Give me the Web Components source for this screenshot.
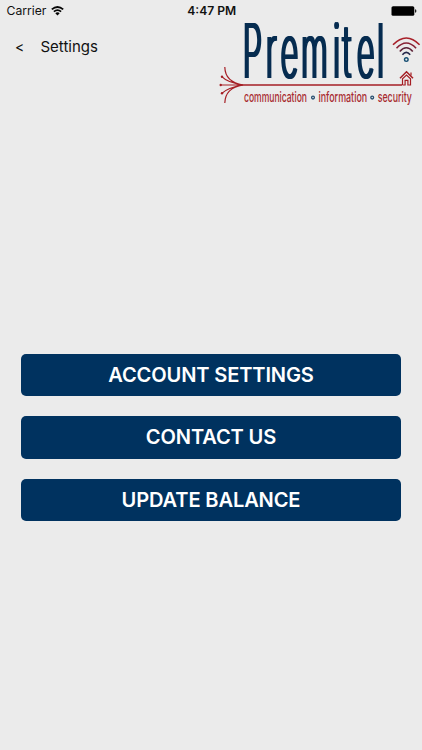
<!DOCTYPE html>
<html lang="en"><head><meta charset="utf-8"><title>Settings</title>
<style>html,body{margin:0;height:100%;background:#ebebeb}</style></head>
<body><settings-screen></settings-screen>
<script>
function define(name, markup) {
  customElements.define(name, class extends HTMLElement {
    constructor() { super(); this.attachShadow({mode:'open'}).innerHTML = markup; }
  });
}
define('status-bar', `<style>
:host{display:grid;grid-template-columns:1fr auto 1fr;align-items:center;height:22px;padding:0 5px 0 6.5px;box-sizing:border-box;font-size:12.2px;line-height:22px}
.left{display:flex;align-items:center;gap:5px}
.time{font-weight:600;font-size:12.1px}
.battery{justify-self:end}
svg{display:block}
</style><div class="left"><span>Carrier</span><svg width="13" height="10" viewBox="0 0 13 10" fill="none" stroke="#050505" stroke-width="1.8"><path d="M.8 3.4Q6.5-1.5 12.2 3.4M2.9 5.7Q6.5 2.5 10.1 5.7"/><path d="M4.3 7.2Q6.5 5.3 8.7 7.2L6.5 9.5Z" fill="#050505" stroke="none"/></svg></div>
<span class="time">4:47 PM</span>
<svg class="battery" width="26" height="10" viewBox="0 0 26 10"><rect x=".5" y=".2" width="22.8" height="9.6" rx="1.6"/><path d="M24.1 3.2q1.3.3 1.3 1.8t-1.3 1.8z"/></svg>`);
define('brand-logo', `<style>
:host{display:block;width:206px;height:90px}svg{display:block;overflow:visible}
text{font-family:Inter,sans-serif}
.name{font-size:75.2px;font-weight:300;fill:#062c50}
.tag{font-size:14px;font-weight:500;fill:#a82a30}
</style><svg width="206" height="90" viewBox="216 18 206 90">
<defs><filter id="wide" filterUnits="userSpaceOnUse" x="216" y="0" width="206" height="110" color-interpolation-filters="sRGB"><feOffset in="SourceGraphic" dx="1" result="a"/><feOffset in="SourceGraphic" dx="2" result="b"/><feMerge><feMergeNode in="SourceGraphic"/><feMergeNode in="a"/><feMergeNode in="b"/></feMerge></filter></defs>
<g filter="url(#wide)"><g transform="translate(241.7 77.7) scale(.41 1)"><text class="name" x="0 56.3 92 142 220 243 278 327.5">Premitel</text></g></g>
<g fill="none" stroke="#a51e24">
<path d="M239 85H402" stroke-width="1.7"/>
<path d="M220 85H242M221.5 76.3C226 81 234 83.5 243 85C234 86.5 226 89 221.5 93.7M224.8 67C225 77 231 83 243 85C231 87 225 93 224.8 103" stroke-width="1.2"/>
<path d="M400 78.3L406.5 71.8L413 78.3" stroke-width="1.5"/><path d="M402.5 85V78.8L406.5 75L410.5 78.8V85H407.9V80.3H405.1V85H402.5M411 72.5V75.5" stroke-width="1.2"/>
</g>
<g fill="#a51e24"><circle cx="220.7" cy="85" r="1.2"/><circle cx="222" cy="76.7" r="1.2"/><circle cx="222" cy="93.3" r="1.2"/></g>
<g fill="none" stroke-width="1.6"><path d="M393 44.8Q406.3 31.2 419.6 44.8" stroke="#a82029"/><path d="M396.5 48.3Q406.3 37.7 416.1 48.3" stroke="#872235"/><path d="M399.8 51.5Q406.3 44 412.8 51.5" stroke="#5f2439"/><path d="M402.4 54.7Q406.3 50.1 410.2 54.7" stroke="#26284b"/><circle cx="406.3" cy="59.6" r="1.8" stroke="#174f73" stroke-width="1.4"/></g>
<g transform="translate(244 101.7) scale(.6 1)"><text class="tag" textLength="105" lengthAdjust="spacingAndGlyphs">communication</text></g>
<g transform="translate(318.5 101.7) scale(.6 1)"><text class="tag" textLength="81" lengthAdjust="spacingAndGlyphs">information</text></g>
<g transform="translate(377.7 101.7) scale(.6 1)"><text class="tag" textLength="57" lengthAdjust="spacingAndGlyphs">security</text></g>
<g fill="none" stroke="#284f70" stroke-width="1.3"><circle cx="313" cy="97.6" r="1.4"/><circle cx="372.2" cy="97.6" r="1.4"/></g>
</svg>`);
define('nav-header', `<style>
:host{display:flex;justify-content:space-between;height:90px;margin-top:-4px}
.title{display:flex;height:57px;align-items:center;padding-left:15px;font-size:15px}
.back{width:25.5px;font-size:14px}
</style><div class="title"><span class="back">&lt;</span><span><slot></slot></span></div><brand-logo></brand-logo>`);
define('action-button', `<style>
:host{display:block}
button{display:block;width:100%;height:42.2px;padding:0;border:0;border-radius:5px;background:#00325f;color:#fff;font:600 20.1px/43px Inter,sans-serif;letter-spacing:-.15px}
</style><button><slot></slot></button>`);
define('settings-screen', `<style>
:host{display:flex;flex-direction:column;height:750px;background:#ebebeb;color:#111;font-family:Inter,sans-serif}
main{display:flex;flex-direction:column;gap:20.3px;margin:246px 20.7px 0}
</style><status-bar></status-bar><nav-header>Settings</nav-header><main><action-button>ACCOUNT SETTINGS</action-button><action-button>CONTACT US</action-button><action-button>UPDATE BALANCE</action-button></main>`);
</script></body></html>
